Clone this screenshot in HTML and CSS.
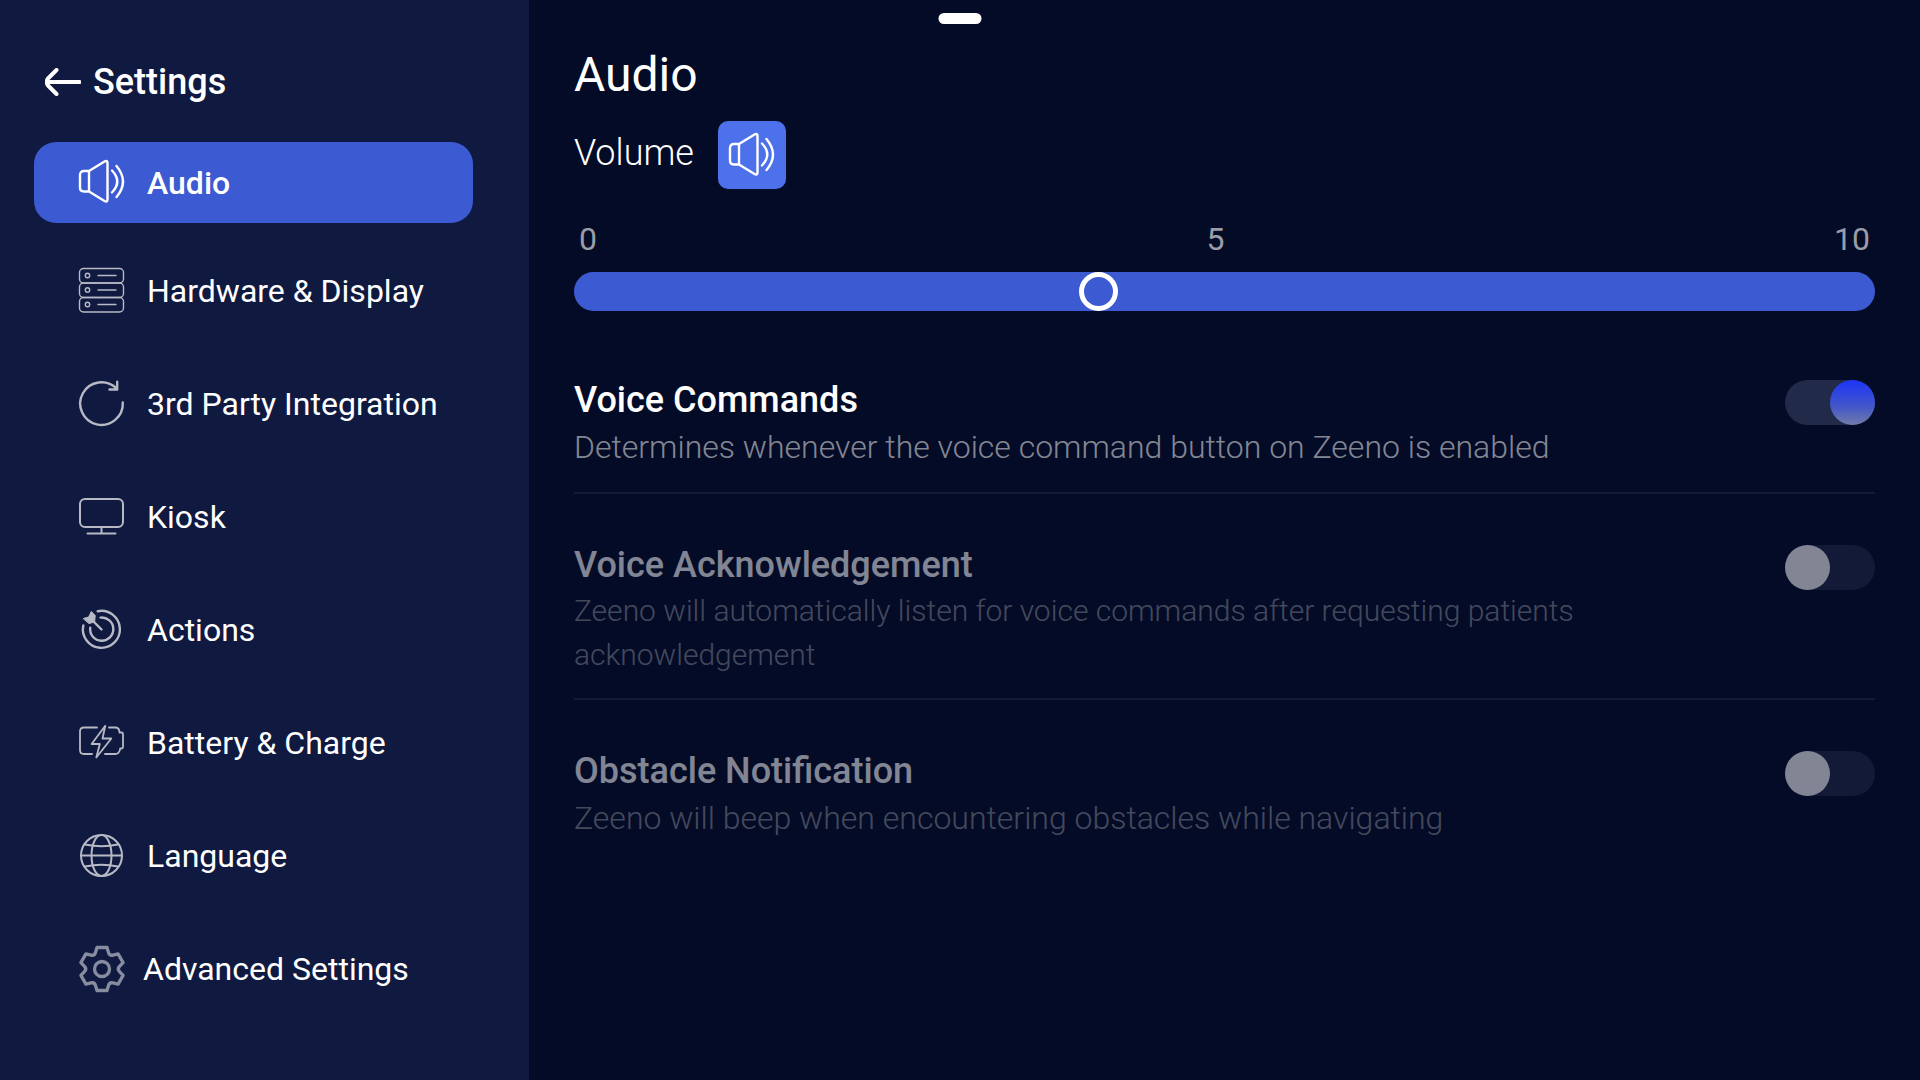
FILE: index.html
```html
<!DOCTYPE html>
<html lang="en">
<head>
  <meta charset="utf-8">
  <meta name="viewport" content="width=device-width, initial-scale=1">
  <title>Settings – Audio</title>
  <link rel="stylesheet" href="styles.css">
</head>
<body>
  <div class="handle"></div>
  <div class="app">
    <aside class="sidebar">
      <a class="back" href="#back">
        <svg class="back-icon" viewBox="0 0 36 28" aria-hidden="true"><path d="M34.500 14H2M11.500 2L3 10.500Q.5 14 3 17.500L11.500 26"/></svg>
        <span>Settings</span>
      </a>
      <nav class="nav" aria-label="Settings sections">
        <a class="nav-item nav-item-active" href="#audio" aria-current="page">
          <svg class="icon icon-bold" viewBox="0 0 45 45" aria-hidden="true"><path d="M10 11H5Q1 11 1 15V27.500Q1 31.500 5 31.500H10ZM10 11L25.500 1.500Q28.500 0 28.500 3V39.500Q28.500 42.500 25.500 41L10 31.500M33 10.500Q43.500 21.500 33 32.500M37.500 6Q50.500 21.500 37.500 37"/></svg>
          <span>Audio</span>
        </a>
        <a class="nav-item" href="#hardware">
          <svg class="icon icon-fine" viewBox="0 0 45 45" aria-hidden="true"><rect x=".5" y=".5" width="44" height="14.500" rx="4"/><rect x=".5" y="15" width="44" height="14.500" rx="4"/><rect x=".5" y="29.500" width="44" height="14.500" rx="4"/><circle cx="8.500" cy="7.500" r="2.200"/><circle cx="8.500" cy="22" r="2.200"/><circle cx="8.500" cy="36.500" r="2.200"/><path d="M19 7.500H37M19 22H37M19 36.500H37"/></svg>
          <span>Hardware &amp; Display</span>
        </a>
        <a class="nav-item" href="#integration">
          <svg class="icon icon-bold" viewBox="0 0 45 45" aria-hidden="true"><path d="M43.800 21.500A21.300 21.300 0 1 1 37.500 7.400M38.200.8V8.500H30.500"/></svg>
          <span>3rd Party Integration</span>
        </a>
        <a class="nav-item" href="#kiosk">
          <svg class="icon" viewBox="0 0 45 45" aria-hidden="true"><rect x="1" y="5" width="43" height="28" rx="5"/><path d="M22.500 33V39.500M8.500 39.500H36.500"/></svg>
          <span>Kiosk</span>
        </a>
        <a class="nav-item" href="#actions">
          <svg class="icon icon-bold" viewBox="0 0 45 45" aria-hidden="true"><path d="M18.700 4.200A18.500 18.500 0 1 1 4.300 18.500M21.500 10.600A11.600 11.600 0 1 1 11.200 20.800M22.500 22.500L13 13"/><path class="solid" d="M4.500 11.500L9.700 10L12.300 4.500L16.200 8.500L15.700 14.800L10.300 16.500Z"/></svg>
          <span>Actions</span>
        </a>
        <a class="nav-item" href="#battery">
          <svg class="icon icon-medium" viewBox="0 0 45 45" aria-hidden="true"><path d="M18 7.500H5Q1 7.500 1 11.500V30Q1 34 5 34H13M30 7.500H36Q40.500 7.500 40.500 12.500H42.500Q44 12.500 44 14V27Q44 28.500 42.500 28.500H41.200Q40.500 34 36 34H26M26.300 5.800L12.600 24H20.800L17.300 37.500L32.300 18.500H23.500Z"/></svg>
          <span>Battery &amp; Charge</span>
        </a>
        <a class="nav-item" href="#language">
          <svg class="icon" viewBox="0 0 45 45" aria-hidden="true"><circle cx="22.500" cy="22.500" r="20.500"/><ellipse cx="22.500" cy="22.500" rx="10" ry="20.500"/><path d="M2 22.500H43M6 11.500Q22.500 15 39 11.500M6 33.500Q22.500 30 39 33.500"/></svg>
          <span>Language</span>
        </a>
        <a class="nav-item nav-item-advanced" href="#advanced">
          <svg class="icon icon-gear" viewBox="-23 -23 46 46" aria-hidden="true"><path d="M-5-21.500H5L6.500-16.500Q7.500-13 11-13.900L16.100-15.100L21.100-6.400L17.500-2.600Q15 0 17.500 2.600L21.100 6.400L16.100 15.100L11 13.900Q7.500 13 6.500 16.500L5 21.500H-5L-6.500 16.500Q-7.500 13-11 13.900L-16.100 15.100L-21.100 6.400L-17.500 2.600Q-15 0-17.500-2.600L-21.100-6.400L-16.100-15.100L-11-13.900Q-7.500-13-6.500-16.500Z"/><circle r="7.500"/></svg>
          <span>Advanced Settings</span>
        </a>
      </nav>
    </aside>

    <main class="content">
      <h1 class="title">Audio</h1>
      <div class="volume">
        <label class="volume-label" for="volume">Volume</label>
        <button class="volume-button" type="button" aria-label="Mute">
          <svg class="icon icon-bold" viewBox="0 0 45 45" aria-hidden="true"><path d="M10 11H5Q1 11 1 15V27.500Q1 31.500 5 31.500H10ZM10 11L25.500 1.500Q28.500 0 28.500 3V39.500Q28.500 42.500 25.500 41L10 31.500M33 10.500Q43.500 21.500 33 32.500M37.500 6Q50.500 21.500 37.500 37"/></svg>
        </button>
      </div>
      <div class="scale"><span>0</span><span>5</span><span>10</span></div>
      <input class="slider" id="volume" type="range" min="0" max="10" value="4">

      <div class="options">
        <section class="option">
          <div class="option-text">
            <label class="option-name" for="voice-commands">Voice Commands</label>
            <p class="option-note">Determines whenever the voice command button on Zeeno is enabled</p>
          </div>
          <input class="switch" id="voice-commands" type="checkbox" role="switch" checked>
        </section>
        <section class="option option-dim">
          <div class="option-text">
            <label class="option-name" for="voice-ack">Voice Acknowledgement</label>
            <p class="option-note option-note-long">Zeeno will automatically listen for voice commands after requesting patients acknowledgement</p>
          </div>
          <input class="switch" id="voice-ack" type="checkbox" role="switch">
        </section>
        <section class="option option-dim">
          <div class="option-text">
            <label class="option-name" for="obstacle">Obstacle Notification</label>
            <p class="option-note">Zeeno will beep when encountering obstacles while navigating</p>
          </div>
          <input class="switch" id="obstacle" type="checkbox" role="switch">
        </section>
      </div>
    </main>
  </div>
</body>
</html>
```

FILE: styles.css
```css
* {
  box-sizing: border-box;
}

body {
  margin: 0;
  background: #040b26;
  color: #fff;
  font-family: Roboto, "Liberation Sans", sans-serif;
  font-size: 32px;
}

a {
  color: inherit;
  text-decoration: none;
}

.handle {
  position: absolute;
  top: 13px;
  left: 50%;
  width: 43px;
  height: 11px;
  border-radius: 6px;
  background: #fff;
  transform: translateX(-50%);
}

.app {
  display: grid;
  grid-template-columns: minmax(440px, 27.55%) 1fr;
  min-height: 100vh;
}

/* Sidebar */
.sidebar {
  padding: 58px 56px 32px 34px;
  background: #10193f;
}

.back {
  display: flex;
  align-items: center;
  gap: 12px;
  margin-bottom: 36px;
  padding-left: 11px;
  font-size: 36px;
  font-weight: 500;
  line-height: 48px;
}

.back-icon {
  width: 36px;
  height: 28px;
  fill: none;
  stroke: #fff;
  stroke-width: 4;
  stroke-linecap: round;
  stroke-linejoin: round;
}

.nav {
  display: flex;
  flex-direction: column;
  gap: 22px;
}

.nav-item {
  display: flex;
  align-items: center;
  gap: 23px;
  min-height: 91px;
  padding: 0 16px 0 45px;
  border-radius: 22px;
  line-height: 40px;
  white-space: nowrap;
}

.nav-item-active {
  min-height: 81px;
  background: #3c5ad2;
  font-weight: 500;
}

.nav-item-advanced {
  gap: 18px;
}

.icon {
  flex: none;
  width: 45px;
  height: 45px;
  overflow: visible;
  fill: none;
  stroke: #b7bac5;
  stroke-width: 2;
  stroke-linecap: round;
  stroke-linejoin: round;
}

.icon-fine {
  stroke-width: 1.4;
}

.icon-medium {
  stroke-width: 1.8;
}

.icon-bold {
  stroke-width: 2.4;
}

.icon-gear {
  width: 46px;
  height: 46px;
  stroke: #878c9f;
  stroke-width: 3.3;
}

.icon .solid {
  fill: #b7bac5;
  stroke-width: 1;
}

.nav-item-active .icon,
.volume-button .icon {
  stroke: #fff;
}

/* Content */
.content {
  padding: 47px 45px 32px;
}

.title {
  margin: 0 0 18px;
  font-size: 48px;
  font-weight: 400;
  line-height: 56px;
}

.volume {
  display: flex;
  gap: 24px;
  margin-bottom: 31px;
}

.volume-label {
  font-size: 36px;
  font-weight: 300;
  line-height: 64px;
}

.volume-button {
  display: flex;
  align-items: center;
  justify-content: center;
  width: 68px;
  height: 68px;
  padding: 0;
  border: 0;
  border-radius: 10px;
  background: #4d71ea;
}

.scale {
  display: flex;
  justify-content: space-between;
  margin-bottom: 14px;
  padding: 0 5px;
  color: #9a9da8;
  line-height: 38px;
}

.slider {
  display: block;
  width: 100%;
  height: 39px;
  margin: 0;
  border-radius: 20px;
  background: #3c5ad2;
  appearance: none;
}

.slider::-webkit-slider-thumb {
  width: 39px;
  height: 39px;
  border: 5px solid #fff;
  border-radius: 50%;
  background: #3c5ad2;
  appearance: none;
}

.options {
  margin-top: 18px;
}

.option {
  display: flex;
  align-items: flex-start;
  justify-content: space-between;
  gap: 24px;
  padding: 47px 0 21px;
}

.option + .option {
  border-top: 2px solid #141b38;
}

.option-dim > * {
  opacity: .5;
}

.option-name {
  display: block;
  font-size: 36px;
  font-weight: 500;
  line-height: 48px;
}

.option-note {
  margin: 0;
  color: rgb(255 255 255 / 52%);
  font-weight: 300;
  line-height: 47px;
}

.option-note-long {
  font-size: 30px;
  line-height: 44px;
}

.switch {
  flex: none;
  width: 90px;
  height: 45px;
  margin: 4px 0 0;
  border-radius: 23px;
  background: #222a4a;
  appearance: none;
}

.switch::before {
  display: block;
  width: 45px;
  height: 45px;
  border-radius: 50%;
  background: #fff;
  content: "";
}

.switch:checked::before {
  margin-left: auto;
  background: linear-gradient(#1c34f8, #4457c8 60%, #717ca8);
}
```
